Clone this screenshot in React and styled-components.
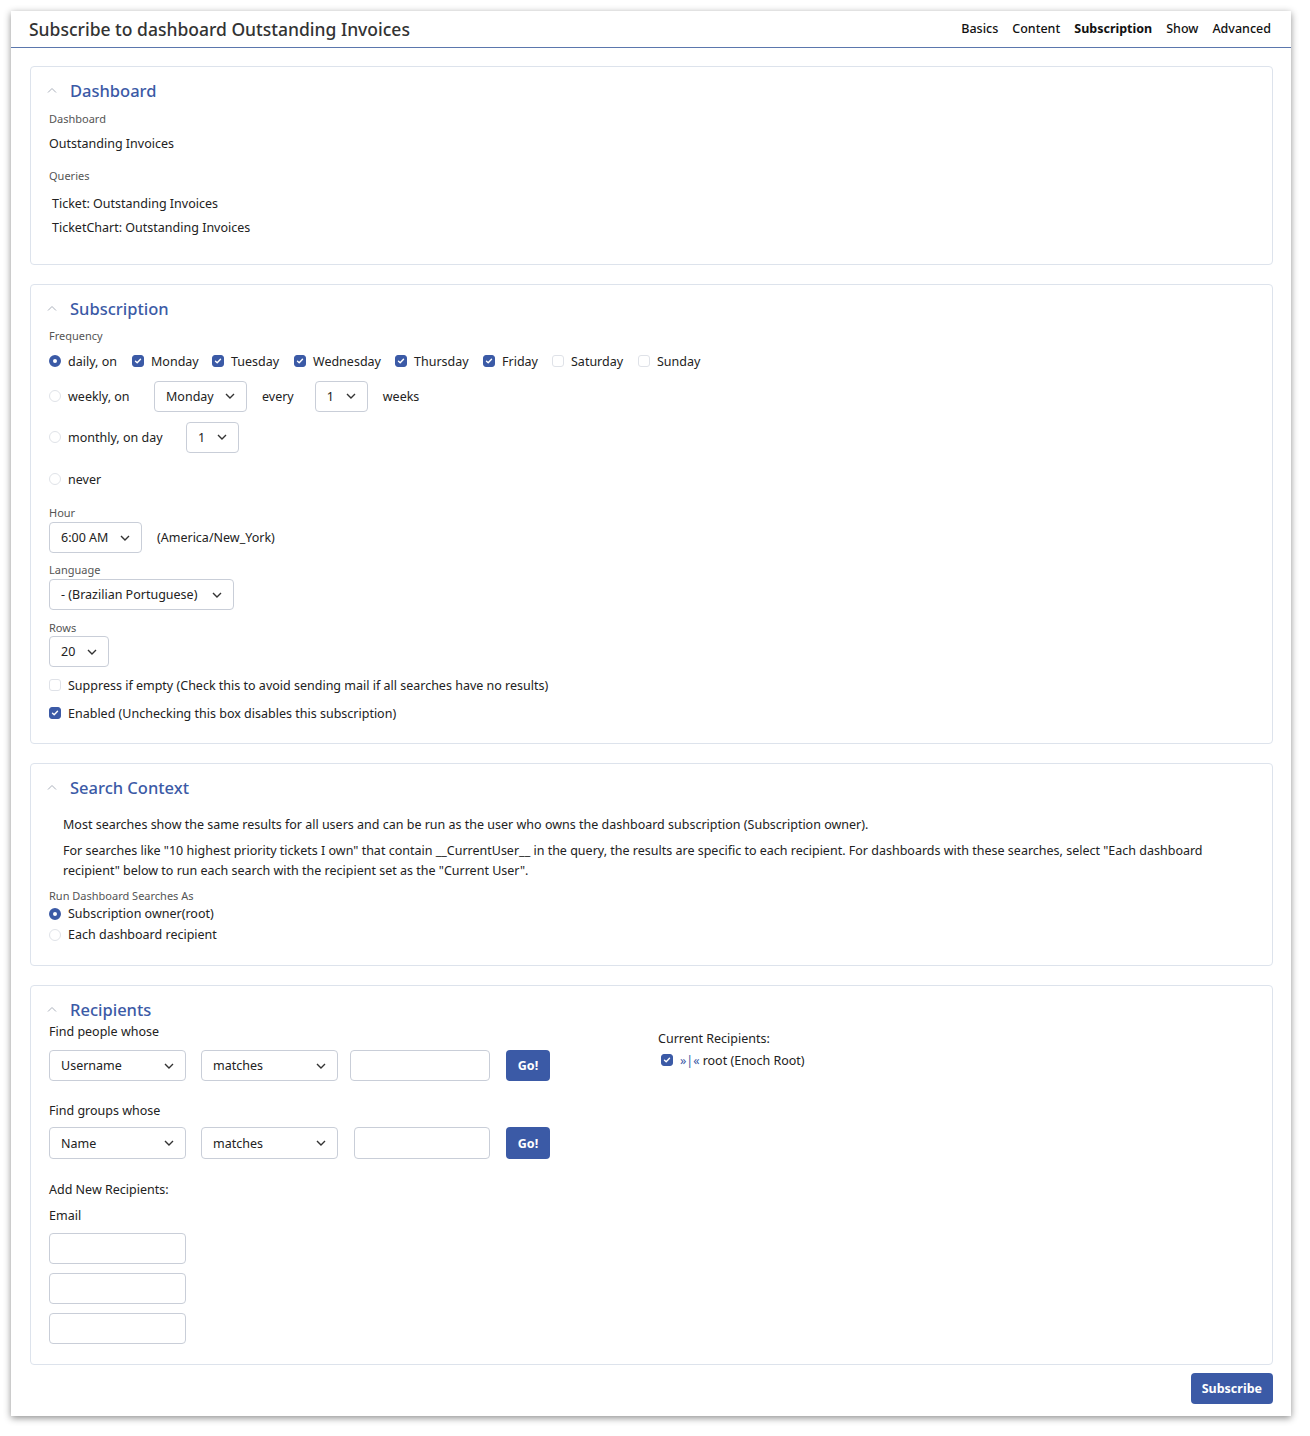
import React from "react";
import styled, { createGlobalStyle } from "styled-components";

const GlobalStyle = createGlobalStyle`
  html, body {
    margin: 0;
    padding: 0;
    background: #ffffff;
  }
  body {
    font-family: "Noto Sans", "Open Sans", sans-serif;
    font-size: 12.5px;
    color: #222;
  }
`;

const Page = styled.div`
  padding: 11px 19px 20px 11px;
`;

const Window = styled.div`
  background: #fff;
  box-shadow: 0 2px 7px rgba(0, 0, 0, 0.45);
  padding-bottom: 12px;
`;

const Header = styled.div`
  display: flex;
  align-items: center;
  justify-content: space-between;
  height: 35px;
  padding: 0 20px 1px 18px;
  border-bottom: 1px solid #5b77ad;
`;

const Title = styled.h1`
  margin: 0;
  font-size: 17.5px;
  font-weight: 500;
  color: #333;
`;

const Nav = styled.nav`
  display: flex;
  gap: 14px;
`;

const NavItem = styled.span`
  font-size: 12.5px;
  font-weight: ${(p) => (p.$active ? 700 : 500)};
  color: #111;
`;

const Body = styled.div`
  padding: 18px 18px 0 19px;
  display: flex;
  flex-direction: column;
  gap: 19px;
`;

const Card = styled.section`
  border: 1px solid #dde3ec;
  border-radius: 4px;
  padding: 12px 18px ${(p) => p.$pb || 19}px 18px;
`;

const CardHead = styled.div`
  display: flex;
  align-items: center;
  gap: 13px;
  margin-bottom: ${(p) => p.$mb || 8}px;

  svg {
    margin-left: -2px;
  }
`;

const CardTitle = styled.h2`
  margin: 0;
  font-size: 16.5px;
  font-weight: 500;
  color: #3b5aa6;
`;

const Label = styled.div`
  font-size: 11px;
  color: #555;
  margin: ${(p) => p.$m || "0 0 6px 0"};
`;

const Text = styled.div`
  font-size: 12.5px;
  color: #222;
  padding-left: ${(p) => p.$indent || 0}px;
  margin: ${(p) => p.$m || "0"};
  line-height: ${(p) => p.$lh || "normal"};
`;

const Row = styled.div`
  display: flex;
  align-items: center;
  height: ${(p) => p.$h || 24}px;
  margin: ${(p) => p.$m || "0"};
`;

const Opt = styled.label`
  display: inline-flex;
  align-items: center;
  gap: 7px;
  box-sizing: border-box;
  font-size: 12.5px;
  color: #222;
  width: ${(p) => (p.$w ? `${p.$w}px` : "auto")};
  flex: none;
`;

const BoxMark = styled.span`
  width: 10px;
  height: 10px;
  border-radius: 3px;
  border: 1px solid ${(p) => (p.$on ? "#3b5aa6" : "#dfe2e8")};
  background: ${(p) => (p.$on ? "#3b5aa6" : "#fff")};
  display: inline-flex;
  align-items: center;
  justify-content: center;
  flex: none;
`;

const RadioMark = styled.span`
  width: ${(p) => (p.$on ? 4 : 10)}px;
  height: ${(p) => (p.$on ? 4 : 10)}px;
  border-radius: 50%;
  border: ${(p) => (p.$on ? "4px solid #3b5aa6" : "1px solid #e0e3e8")};
  background: #fff;
  flex: none;
`;

const Check = ({ on }) => (
  <BoxMark $on={on}>
    {on && (
      <svg width="8" height="8" viewBox="0 0 8 8">
        <polyline
          points="1.5,4.2 3.2,5.8 6.5,2.3"
          fill="none"
          stroke="#fff"
          strokeWidth="1.4"
          strokeLinecap="round"
          strokeLinejoin="round"
        />
      </svg>
    )}
  </BoxMark>
);

const Chevron = () => (
  <svg width="10" height="7" viewBox="0 0 10 7">
    <polyline points="1,5.5 5,1.5 9,5.5" fill="none" stroke="#aab0bb" strokeWidth="1" />
  </svg>
);

const SelectBox = styled.div`
  display: inline-flex;
  align-items: center;
  justify-content: space-between;
  box-sizing: border-box;
  width: ${(p) => p.$w}px;
  height: ${(p) => p.$h || 31}px;
  padding: 0 11px 0 11px;
  border: 1px solid #c9ced8;
  border-radius: 4px;
  font-size: 12.5px;
  color: #222;
  background: #fff;
  flex: none;
`;

const Caret = () => (
  <svg width="10" height="6" viewBox="0 0 10 6">
    <polyline points="1,1 5,5 9,1" fill="none" stroke="#333" strokeWidth="1.4" />
  </svg>
);

const Select = ({ w, value, h }) => (
  <SelectBox $w={w} $h={h}>
    <span>{value}</span>
    <Caret />
  </SelectBox>
);

const Input = styled.div`
  box-sizing: border-box;
  width: ${(p) => p.$w}px;
  height: ${(p) => p.$h || 31}px;
  border: 1px solid #c9ced8;
  border-radius: 4px;
  background: #fff;
  margin: ${(p) => p.$m || "0"};
  flex: none;
`;

const Button = styled.button`
  font-family: inherit;
  background: #3b5aa6;
  color: #fff;
  border: none;
  border-radius: 4px;
  font-weight: 700;
  font-size: 12.5px;
  height: ${(p) => p.$h || 31}px;
  width: ${(p) => (p.$w ? `${p.$w}px` : "auto")};
  padding: 0 ${(p) => p.$px || 0}px;
`;

const Spacer = styled.span`
  display: inline-block;
  flex: none;
  width: ${(p) => p.$w}px;
`;

const RecipGrid = styled.div`
  display: grid;
  grid-template-columns: 609px 1fr;
`;

const Arrows = styled.span`
  color: #3b5aa6;
  margin-right: 3px;
`;

const Footer = styled.div`
  display: flex;
  justify-content: flex-end;
  padding: 8px 18px 0 0;
`;

const days = [
  ["Monday", true, 80],
  ["Tuesday", true, 82],
  ["Wednesday", true, 101],
  ["Thursday", true, 88],
  ["Friday", true, 69],
  ["Saturday", false, 86],
  ["Sunday", false, 0],
];

export default function App() {
  return (
    <>
      <GlobalStyle />
      <Page>
        <Window>
          <Header>
            <Title>Subscribe to dashboard Outstanding Invoices</Title>
            <Nav>
              <NavItem>Basics</NavItem>
              <NavItem>Content</NavItem>
              <NavItem $active>Subscription</NavItem>
              <NavItem>Show</NavItem>
              <NavItem>Advanced</NavItem>
            </Nav>
          </Header>
          <Body>
            <Card $pb={24}>
              <CardHead $mb={9}>
                <Chevron />
                <CardTitle>Dashboard</CardTitle>
              </CardHead>
              <Label $m="0 0 9px 0">Dashboard</Label>
              <Text $m="0 0 16px 0">Outstanding Invoices</Text>
              <Label $m="0 0 9px 0">Queries</Label>
              <Text $indent={3} $lh="24px">Ticket: Outstanding Invoices</Text>
              <Text $indent={3} $lh="24px">TicketChart: Outstanding Invoices</Text>
            </Card>

            <Card $pb={18}>
              <CardHead $mb={8}>
                <Chevron />
                <CardTitle>Subscription</CardTitle>
              </CardHead>
              <Label $m="0 0 5px 0">Frequency</Label>
              <Row $h={26}>
                <Opt $w={83}>
                  <RadioMark $on />
                  daily, on
                </Opt>
                {days.map(([d, on, w]) => (
                  <Opt key={d} $w={w}>
                    <Check on={on} />
                    {d}
                  </Opt>
                ))}
              </Row>
              <Row $h={34} $m="5px 0 0 0">
                <Opt $w={105}>
                  <RadioMark />
                  weekly, on
                </Opt>
                <Select w={93} value="Monday" />
                <Spacer $w={15} />
                <Text>every</Text>
                <Spacer $w={21} />
                <Select w={53} value="1" />
                <Spacer $w={15} />
                <Text>weeks</Text>
              </Row>
              <Row $h={34} $m="7px 0 0 0">
                <Opt $w={137}>
                  <RadioMark />
                  monthly, on day
                </Opt>
                <Select w={53} value="1" />
              </Row>
              <Row $h={24} $m="13px 0 0 0">
                <Opt>
                  <RadioMark />
                  never
                </Opt>
              </Row>
              <Label $m="14px 0 2px 0">Hour</Label>
              <Row $h={31}>
                <Select w={93} value="6:00 AM" />
                <Spacer $w={15} />
                <Text>(America/New_York)</Text>
              </Row>
              <Label $m="9px 0 2px 0">Language</Label>
              <Row $h={31}>
                <Select w={185} value="- (Brazilian Portuguese)" />
              </Row>
              <Label $m="10px 0 1px 0">Rows</Label>
              <Row $h={31}>
                <Select w={60} value="20" />
              </Row>
              <Row $h={24} $m="6px 0 0 0">
                <Opt>
                  <Check />
                  Suppress if empty (Check this to avoid sending mail if all searches have no results)
                </Opt>
              </Row>
              <Row $h={24} $m="4px 0 0 0">
                <Opt>
                  <Check on />
                  Enabled (Unchecking this box disables this subscription)
                </Opt>
              </Row>
            </Card>

            <Card $pb={20}>
              <CardHead $mb={16}>
                <Chevron />
                <CardTitle>Search Context</CardTitle>
              </CardHead>
              <Text $indent={14} $lh="20px" $m="0 0 6px 0">
                Most searches show the same results for all users and can be run as the user who
                owns the dashboard subscription (Subscription owner).
              </Text>
              <Text $indent={14} $lh="20px">
                For searches like "10 highest priority tickets I own" that contain __CurrentUser__ in
                the query, the results are specific to each recipient. For dashboards with these
                searches, select "Each dashboard recipient" below to run each search with the
                recipient set as the "Current User".
              </Text>
              <Label $m="7px 0 0 0">Run Dashboard Searches As</Label>
              <Row $h={21}>
                <Opt>
                  <RadioMark $on />
                  Subscription owner(root)
                </Opt>
              </Row>
              <Row $h={21}>
                <Opt>
                  <RadioMark />
                  Each dashboard recipient
                </Opt>
              </Row>
            </Card>

            <Card $pb={20}>
              <CardHead $mb={2}>
                <Chevron />
                <CardTitle>Recipients</CardTitle>
              </CardHead>
              <RecipGrid>
                <div>
                  <Text $m="0 0 10px 0">Find people whose</Text>
                  <Row $h={31}>
                    <Select w={137} value="Username" />
                    <Spacer $w={15} />
                    <Select w={137} value="matches" />
                    <Spacer $w={12} />
                    <Input $w={140} />
                    <Spacer $w={16} />
                    <Button $w={44}>Go!</Button>
                  </Row>
                  <Text $m="21px 0 8px 0">Find groups whose</Text>
                  <Row $h={32}>
                    <Select w={137} h={32} value="Name" />
                    <Spacer $w={15} />
                    <Select w={137} h={32} value="matches" />
                    <Spacer $w={16} />
                    <Input $w={136} $h={32} />
                    <Spacer $w={16} />
                    <Button $w={44} $h={32}>Go!</Button>
                  </Row>
                  <Text $m="22px 0 9px 0">Add New Recipients:</Text>
                  <Text $m="0 0 9px 0">Email</Text>
                  <Input $w={137} $m="0 0 9px 0" />
                  <Input $w={137} $m="0 0 9px 0" />
                  <Input $w={137} />
                </div>
                <div>
                  <Text $m="7px 0 3px 0">Current Recipients:</Text>
                  <Row $h={20} $m="0 0 0 3px">
                    <Opt>
                      <Check on />
                      <span>
                        <Arrows>»|«</Arrows>root (Enoch Root)
                      </span>
                    </Opt>
                  </Row>
                </div>
              </RecipGrid>
            </Card>
          </Body>
          <Footer>
            <Button $px={11}>Subscribe</Button>
          </Footer>
        </Window>
      </Page>
    </>
  );
}
